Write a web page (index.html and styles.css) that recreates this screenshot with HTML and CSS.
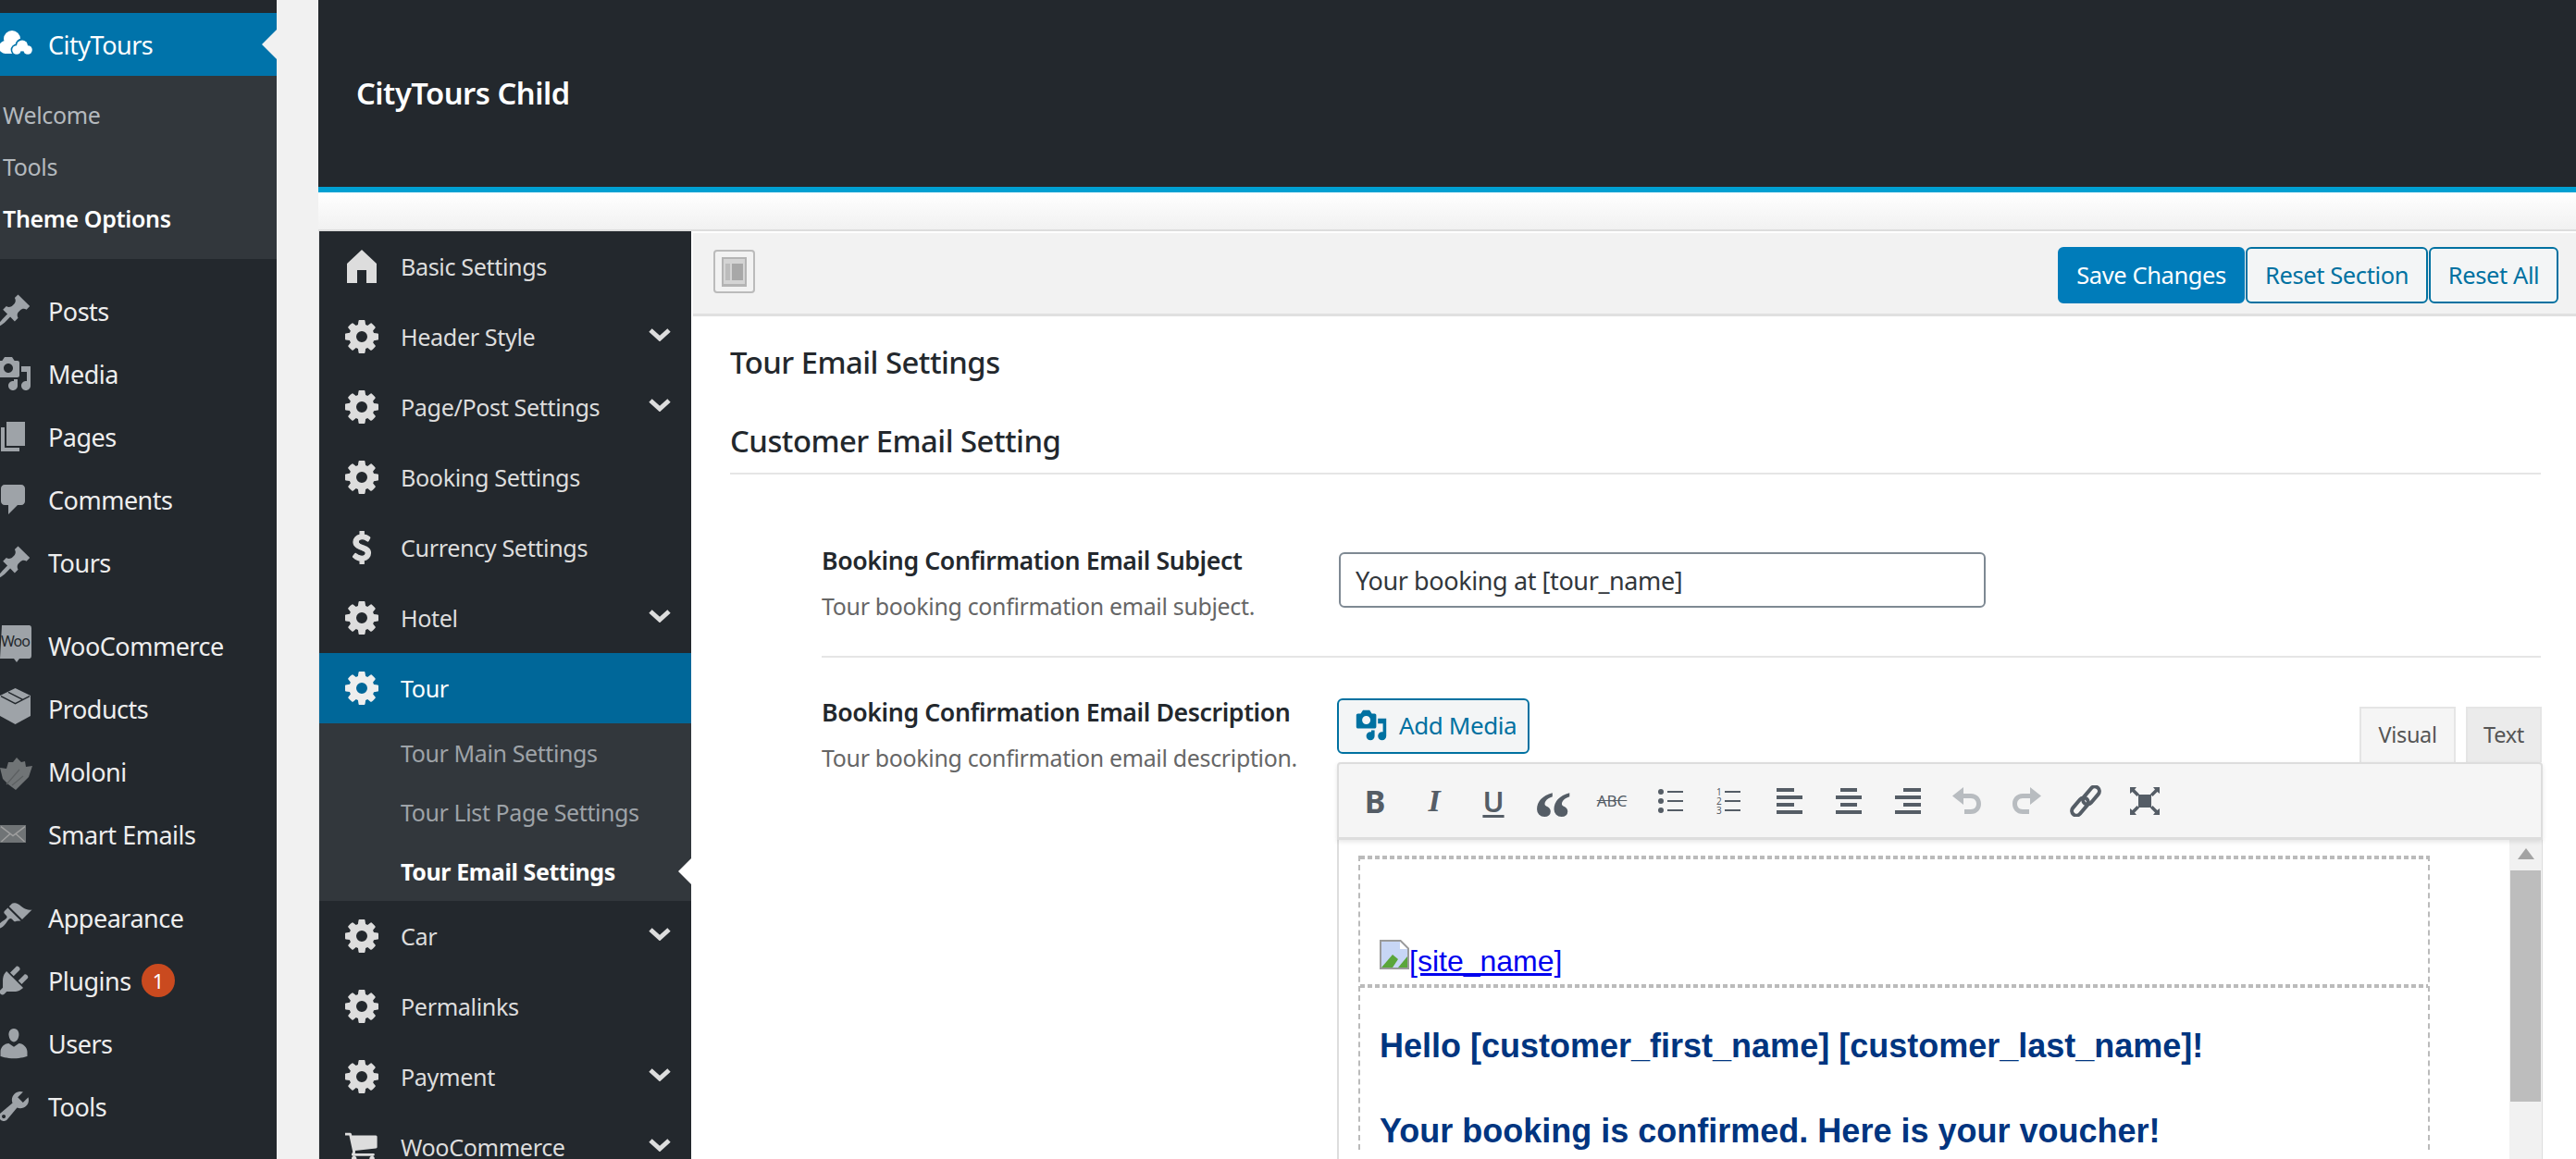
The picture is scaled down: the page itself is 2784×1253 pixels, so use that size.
FILE: index.html
```html
<!DOCTYPE html>
<html lang="en">
<head>
  <meta charset="UTF-8" />
  <title>Tour Email Settings</title>
  <link rel="stylesheet" href="styles.css">
</head>
<body>

  <svg class="sprite" width="0" height="0">
    <symbol id="cog" viewBox="128 128 1536 1536"><path d="M1152 896q0-106-75-181t-181-75-181 75-75 181 75 181 181 75 181-75 75-181zm512-109v222q0 12-8 23t-20 13l-185 28q-19 54-39 91 35 50 107 138 10 12 10 25t-9 23q-27 37-99 108t-94 71q-12 0-26-9l-138-108q-44 23-91 38-16 136-29 186-7 28-36 28h-222q-14 0-24.5-8.5t-11.5-21.5l-28-184q-49-16-90-37l-141 107q-10 9-25 9-14 0-25-11-126-114-165-168-7-10-7-23 0-12 8-23 15-21 51-66.5t54-70.5q-27-50-41-99l-183-27q-13-2-21-12.5t-8-23.5v-222q0-12 8-23t19-13l186-28q14-46 39-92-40-57-107-138-10-12-10-24 0-10 9-23 26-36 98.5-107.5t94.5-71.5q13 0 26 10l138 107q44-23 91-38 16-136 29-186 7-28 36-28h222q14 0 24.5 8.5t11.5 21.5l28 184q49 16 90 37l142-107q9-9 24-9 13 0 25 10 129 119 165 170 7 8 7 22 0 12-8 23-15 21-51 66.5t-54 70.5q26 50 41 98l183 28q13 2 21 12.5t8 23.5z"/></symbol>
    <symbol id="chev" viewBox="0 0 24 16"><path d="M2 4l10 9 10-9" fill="none" stroke="currentColor" stroke-width="5"/></symbol>
    <symbol id="pin" viewBox="0 0 20 20"><path d="M10.44 3.02l1.82-1.82 6.36 6.35-1.83 1.82c-1.05-.68-2.48-.57-3.41.36l-.75.75c-.92.93-1.04 2.35-.35 3.41l-1.83 1.82-2.41-2.41-2.8 2.79c-.42.42-3.38 2.71-3.8 2.29s1.86-3.39 2.28-3.81l2.79-2.79L4.1 9.36l1.83-1.82c1.05.69 2.48.57 3.4-.36l.75-.75c.93-.92 1.05-2.35.36-3.41z"/></symbol>
    <symbol id="media" viewBox="0 0 20 20"><path d="M13 11V4c0-.55-.45-1-1-1h-1.67L9 1H5L3.67 3H2c-.55 0-1 .45-1 1v7c0 .55.45 1 1 1h10c.55 0 1-.45 1-1zM7 4.5c1.38 0 2.5 1.12 2.5 2.5S8.38 9.5 7 9.5 4.5 8.38 4.5 7 5.62 4.5 7 4.5zM14 6h5v10.5c0 1.38-1.12 2.5-2.5 2.5S14 17.88 14 16.5s1.12-2.5 2.5-2.5c.17 0 .34.02.5.05V9h-3V6zm-4 8.05V13h2v3.5c0 1.38-1.12 2.5-2.5 2.5S7 17.88 7 16.5 8.12 14 9.5 14c.17 0 .34.02.5.05z"/></symbol>
  </svg>

  <nav class="admin-menu">
    <div class="admin-item admin-item-active">
      <svg class="admin-icon" viewBox="0 0 20 20">
        <g fill="#fff"><circle cx="9" cy="7" r="4.500"/><circle cx="5.500" cy="11.500" r="3.500"/><rect x="5" y="9" width="9" height="6"/></g>
        <g fill="#0073aa"><circle cx="14.500" cy="10.500" r="3.800"/><circle cx="11.500" cy="13" r="3.200"/><circle cx="17.500" cy="13" r="3.200"/></g>
        <g fill="#fff"><circle cx="14.500" cy="10.800" r="3"/><circle cx="11.500" cy="13" r="2.400"/><circle cx="17.500" cy="13" r="2.400"/></g>
      </svg>
      <span>CityTours</span>
    </div>
    <ul class="admin-sub">
      <li>Welcome</li>
      <li>Tools</li>
      <li class="admin-sub-current">Theme Options</li>
    </ul>

    <div class="admin-group">
      <div class="admin-item"><svg class="admin-icon"><use href="#pin"/></svg><span>Posts</span></div>
      <div class="admin-item"><svg class="admin-icon"><use href="#media"/></svg><span>Media</span></div>
      <div class="admin-item"><svg class="admin-icon" viewBox="0 0 20 20"><path d="M6 15V2h10v13H6zm-1 1h8v2H3V5h2v11z"/></svg><span>Pages</span></div>
      <div class="admin-item"><svg class="admin-icon" viewBox="0 0 20 20"><path d="M5 2h9c1.100 0 2 .9 2 2v7c0 1.100-.9 2-2 2h-2l-5 5v-5H5c-1.100 0-2-.9-2-2V4c0-1.100.9-2 2-2z"/></svg><span>Comments</span></div>
      <div class="admin-item"><svg class="admin-icon"><use href="#pin"/></svg><span>Tours</span></div>
    </div>

    <div class="admin-group">
      <div class="admin-item"><svg class="admin-icon" viewBox="0 0 20 20"><path d="M3.500-1h15a1.500 1.500 0 0 1 1 1.500v15a1.500 1.500 0 0 1-1 1.500h-5.500l-1.500 2-1.500-2h-7.500z"/><text class="woo-text" x="3" y="10.500">Woo</text></svg><span>WooCommerce</span></div>
      <div class="admin-item"><svg class="admin-icon" viewBox="0 0 20 20"><path d="M10.750-1L19 3v11l-8.250 4.500L2.500 14V3z"/><path class="box-line" d="M3 3.300l7.750 4 7.750-4M7 1.200l7.800 4"/></svg><span>Products</span></div>
      <div class="admin-item"><svg class="admin-icon admin-icon-dim" viewBox="0 0 20 20"><path d="M11.500 2.500L14 5l2-.5.500 3 3.500-.5-2 6-3 3-4 4-4-3-3-3L2.500 8 6 8.500 7 5l2.500 0z"/><path class="lotus-line" d="M6 17l7-8M9 17.500l6-5"/></svg><span>Moloni</span></div>
      <div class="admin-item"><svg class="admin-icon admin-icon-dim" viewBox="0 0 20 20"><path d="M2.500 5h14v9.500h-14z"/><path class="mail-line" d="M3 5.800l6.500 5 6.500-5M3.200 14l5-4.500M15.800 14l-5-4.500"/></svg><span>Smart Emails</span></div>
    </div>

    <div class="admin-group">
      <div class="admin-item"><svg class="admin-icon" viewBox="0 0 20 20"><path d="M14.480 11.060L7.410 3.990l1.500-1.500c.5-.56 2.300-.47 3.510.32 1.210.8 1.430 1.280 2.910 2.100 1.180.64 2.450 1.260 4.450.85zm-.71.71L6.700 4.700 4.930 6.470c-.39.39-.39 1.020 0 1.410l1.060 1.060c.39.39.39 1.030 0 1.420-.6.6-1.430 1.110-2.210 1.690-.35.26-.7.53-1.010.84C1.430 13.230.4 14.840 1.200 15.600c.79.76 2.370-.23 3.740-1.600.31-.31.58-.66.84-1.010.58-.78 1.090-1.610 1.690-2.210.39-.39 1.030-.39 1.420 0l1.060 1.060c.39.39 1.020.39 1.410 0z"/></svg><span>Appearance</span></div>
      <div class="admin-item"><svg class="admin-icon" viewBox="0 0 20 20"><path d="M13.110 4.360L9.870 7.600 8 5.730l3.240-3.240c.35-.34 1.050-.2 1.560.32.52.51.66 1.210.31 1.550zm-8 1.770l.91-1.120 9.010 9.010-1.190.84c-.71.71-2.630 1.160-3.820 1.160H6.140L4.900 17.260c-.59.59-1.540.59-2.120 0-.59-.58-.59-1.530 0-2.120l1.240-1.240v-3.880c0-1.130.4-3.190 1.090-3.890zm7.260 3.970l3.240-3.240c.34-.35 1.040-.21 1.550.31.52.51.66 1.210.31 1.550l-3.240 3.250z"/></svg><span>Plugins</span><b class="badge">1</b></div>
      <div class="admin-item"><svg class="admin-icon" viewBox="0 0 20 20"><path d="M10 9.250c-2.270 0-2.730-3.440-2.730-3.440C7 4.020 7.820 2 9.970 2c2.160 0 2.980 2.020 2.710 3.810 0 0-.41 3.440-2.680 3.440zm0 2.570L12.720 10c2.390 0 4.520 2.330 4.520 4.530v2.490s-3.650 1.130-7.240 1.130c-3.650 0-7.240-1.130-7.240-1.130v-2.490c0-2.250 1.940-4.480 4.470-4.480z"/></svg><span>Users</span></div>
      <div class="admin-item"><svg class="admin-icon" viewBox="0 0 20 20"><path d="M16.680 9.770c-1.340 1.340-3.300 1.670-4.950.99l-5.410 6.520c-.99.99-2.590.99-3.580 0s-.99-2.590 0-3.570l6.520-5.420c-.68-1.650-.35-3.610.99-4.950 1.280-1.280 3.120-1.620 4.720-1.060l-2.890 2.890 2.820 2.820 2.860-2.870c.53 1.580.18 3.390-1.080 4.650zM3.810 16.210c.4.39 1.040.39 1.430 0 .4-.4.4-1.040 0-1.430-.39-.4-1.030-.4-1.430 0-.39.39-.39 1.030 0 1.430z"/></svg><span>Tools</span></div>
    </div>
  </nav>

  <div class="main">
    <header class="top-bar"><h2>CityTours Child</h2></header>
    <div class="top-strip"></div>

    <div class="panel">
      <aside class="side">
        <div class="side-item">
          <svg class="side-icon" viewBox="0 0 36 36"><path d="M18 0L34 15v21H23V22H13v14H2V15z"/></svg><span>Basic Settings</span>
        </div>
        <div class="side-item"><svg class="side-icon"><use href="#cog"/></svg><span>Header Style</span><svg class="chev"><use href="#chev"/></svg></div>
        <div class="side-item"><svg class="side-icon"><use href="#cog"/></svg><span>Page/Post Settings</span><svg class="chev"><use href="#chev"/></svg></div>
        <div class="side-item"><svg class="side-icon"><use href="#cog"/></svg><span>Booking Settings</span></div>
        <div class="side-item">
          <svg class="side-icon side-icon-bold" viewBox="256 0 1280 1792"><path d="M1362 1185q0 153-99.500 263.500t-258.500 136.500v175q0 14-9 23t-23 9h-135q-13 0-22.500-9.500t-9.500-22.500v-175q-66-9-127.500-31t-101.500-44.500-74-48-46.500-37.500-17.500-18q-17-21-2-41l103-135q7-10 23-12 15-2 24 9l2 2q113 99 243 125 37 8 74 8 81 0 142.500-43t61.500-122q0-28-15-53t-33.500-42-58.500-37.500-66-32-80-32.500q-39-16-61.500-25t-61.500-26.500-62.500-31-56.500-35.500-53.500-42.500-43.500-49-35.500-58-21-66.500-8.500-78q0-138 98-242t255-134v-180q0-13 9.500-22.500t22.500-9.500h135q14 0 23 9t9 23v176q57 6 110.500 23t87 33.500 63.500 37.500 39 29 15 14q17 18 5 38l-81 146q-8 15-23 16-14 3-27-7-3-3-14.500-12t-39-26.500-58.500-32-74.500-26-85.500-11.500q-95 0-155 43t-60 111q0 26 8.500 48t29.500 41.500 39.500 33 56 31 60.500 27 70 27.500q53 20 81 31.500t76 35 75.500 42.500 62 50 53 63.500 31.500 76.500 13 94z"/></svg><span>Currency Settings</span>
        </div>
        <div class="side-item"><svg class="side-icon"><use href="#cog"/></svg><span>Hotel</span><svg class="chev"><use href="#chev"/></svg></div>
        <div class="side-item side-item-active"><svg class="side-icon"><use href="#cog"/></svg><span>Tour</span></div>
        <ul class="side-sub">
          <li>Tour Main Settings</li>
          <li>Tour List Page Settings</li>
          <li class="side-sub-current">Tour Email Settings</li>
        </ul>
        <div class="side-item"><svg class="side-icon"><use href="#cog"/></svg><span>Car</span><svg class="chev"><use href="#chev"/></svg></div>
        <div class="side-item"><svg class="side-icon"><use href="#cog"/></svg><span>Permalinks</span></div>
        <div class="side-item"><svg class="side-icon"><use href="#cog"/></svg><span>Payment</span><svg class="chev"><use href="#chev"/></svg></div>
        <div class="side-item">
          <svg class="side-icon" viewBox="128 128 1664 1664"><path d="M704 1536q0 52-38 90t-90 38-90-38-38-90 38-90 90-38 90 38 38 90zm896 0q0 52-38 90t-90 38-90-38-38-90 38-90 90-38 90 38 38 90zm128-1088v512q0 24-16.500 42.500t-40.500 21.500l-1044 122q13 60 13 70 0 16-24 64h920q26 0 45 19t19 45-19 45-45 19h-1024q-26 0-45-19t-19-45q0-11 8-31.500t16-36 21.500-40 15.500-29.500l-177-823h-204q-26 0-45-19t-19-45 19-45 45-19h256q16 0 28.500 6.500t19.500 15.500 13 24.500 8 26 5.500 29.500 4.500 26h1201q26 0 45 19t19 45z"/></svg><span>WooCommerce</span><svg class="chev"><use href="#chev"/></svg>
        </div>
      </aside>

      <section class="content">
        <div class="actions">
          <button class="layout-btn">
            <svg width="27" height="32" viewBox="0 0 27 32"><rect width="27" height="32" fill="#b4b4b4"/><rect x="2" y="2" width="23" height="27" fill="#d4d4d4"/><rect x="4" y="7" width="5" height="18" fill="#bcbcbc"/><rect x="11" y="7" width="12" height="18" fill="#a8a8a8"/></svg>
          </button>
          <div class="action-btns">
            <button class="btn btn-primary">Save Changes</button>
            <button class="btn">Reset Section</button>
            <button class="btn btn-reset-all">Reset All</button>
          </div>
        </div>

        <div class="form-wrap">
          <h3 class="page-title">Tour Email Settings</h3>
          <h3 class="section-title">Customer Email Setting</h3>

          <div class="field-row field-row-first">
            <div class="field-label">
              <div class="label-name">Booking Confirmation Email Subject</div>
              <div class="label-desc">Tour booking confirmation email subject.</div>
            </div>
            <div class="field-value">
              <input class="text-input" type="text" value="Your booking at [tour_name]">
            </div>
          </div>

          <div class="field-row field-row-last">
            <div class="field-label">
              <div class="label-name">Booking Confirmation Email Description</div>
              <div class="label-desc">Tour booking confirmation email description.</div>
            </div>
            <div class="field-value">
              <div class="editor-head">
                <button class="btn btn-media">
                  <svg width="36" height="36"><use href="#media"/></svg>Add Media
                </button>
                <div class="tabs">
                  <div class="tab tab-on">Visual</div>
                  <div class="tab">Text</div>
                </div>
              </div>

              <div class="toolbar">
                <span class="tool tool-b">B</span>
                <span class="tool tool-i">I</span>
                <span class="tool tool-u">U</span>
                <span class="tool tool-q">“</span>
                <span class="tool tool-s">ABC</span>
                <span class="tool"><svg width="30" height="26" viewBox="0 0 30 26"><circle cx="4" cy="3" r="3"/><circle cx="4" cy="13" r="3"/><circle cx="4" cy="23" r="3"/><path d="M11 2h17v2H11zM11 12h17v2H11zM11 22h17v2H11z"/></svg></span>
                <span class="tool"><svg class="ol-icon" width="30" height="30" viewBox="0 0 30 30"><text class="ol-num" x="0" y="9">1</text><text class="ol-num" x="0" y="19">2</text><text class="ol-num" x="0" y="29">3</text><path d="M9 4h17v2H9zM9 14h17v2H9zM9 24h17v2H9z"/></svg></span>
                <span class="tool"><svg width="30" height="28" viewBox="0 0 30 28"><path d="M1 0h19v4H1zM1 8h28v4H1zM1 16h19v4H1zM1 24h28v4H1z"/></svg></span>
                <span class="tool"><svg width="30" height="28" viewBox="0 0 30 28"><path d="M6 0h18v4H6zM1 8h28v4H1zM6 16h18v4H6zM1 24h28v4H1z"/></svg></span>
                <span class="tool"><svg width="30" height="28" viewBox="0 0 30 28"><path d="M10 0h19v4H10zM1 8h28v4H1zM10 16h19v4H10zM1 24h28v4H1z"/></svg></span>
                <span class="tool tool-off"><svg width="34" height="30" viewBox="0 0 34 30"><path d="M13 0v7h8c7 0 11 5 11 11s-4 11-11 11h-7v-5h7c4 0 6-3 6-6s-2-6-6-6h-8v7L1 9.500z"/></svg></span>
                <span class="tool tool-off"><svg width="34" height="30" viewBox="0 0 34 30"><path d="M21 0v7h-8C6 7 2 12 2 18s4 11 11 11h7v-5h-7c-4 0-6-3-6-6s2-6 6-6h8v7L33 9.500z"/></svg></span>
                <span class="tool"><svg width="34" height="34" viewBox="0 0 34 34"><g fill="none" stroke="#555d66" stroke-width="4"><rect x="-11" y="-5" width="22" height="10" rx="5" transform="translate(11 23) rotate(-50)"/><rect x="-11" y="-5" width="22" height="10" rx="5" transform="translate(23 11) rotate(-50)"/></g></svg></span>
                <span class="tool"><svg width="34" height="30" viewBox="0 0 34 30"><rect x="10" y="8" width="14" height="14"/><path d="M1 0h7l-2 2.500 5 5-2.500 2.500-5-5L1 7zM33 0h-7l2 2.500-5 5 2.500 2.500 5-5L33 7zM1 30h7l-2-2.500 5-5-2.500-2.500-5 5L1 23zM33 30h-7l2-2.500-5-5 2.500-2.500 5 5L33 23z"/></svg></span>
              </div>

              <div class="editor-body">
                <div class="editor-doc">
                  <div class="mail-box">
                    <div class="mail-head">
                      <svg class="broken-img" width="32" height="32" viewBox="0 0 32 32"><path d="M0 0h23l9 9v23H0z" fill="#9a9a9a"/><path d="M2 2h20l8 8v20H2z" fill="#c7d6f5"/><path d="M2 30l12-14 6 5-6 9z" fill="#5aa63a"/><path d="M20 30l10-12v12z" fill="#5aa63a"/><path d="M22 2v8h8z" fill="#fff"/></svg><a class="site-link">[site_name]</a>
                    </div>
                    <div class="mail-text">
                      <h1>Hello [customer_first_name] [customer_last_name]!</h1>
                      <h1>Your booking is confirmed. Here is your voucher!</h1>
                    </div>
                  </div>
                </div>
                <div class="scroll">
                  <div class="scroll-arrow"></div>
                  <div class="scroll-thumb"></div>
                </div>
              </div>
            </div>
          </div>
        </div>
      </section>
    </div>
  </div>

</body>
</html>
```

FILE: styles.css
```css
* {
  box-sizing: border-box;
}

html, body {
  margin: 0;
  padding: 0;
  height: 1253px;
  overflow: hidden;
}

body {
  display: flex;
  background: #f1f1f1;
  font-family: "Noto Sans", "Open Sans", sans-serif;
  color: #23282d;
}

ul {
  list-style: none;
  margin: 0;
  padding: 0;
}

button {
  font-family: inherit;
}

.sprite {
  display: block;
  width: 0;
  height: 0;
}

/* wp admin menu */
.admin-menu {
  flex: 0 0 299px;
  background: #23282d;
  padding-top: 14px;
  margin-right: 45px;
  overflow: hidden;
}

.admin-item {
  position: relative;
  display: flex;
  align-items: center;
  height: 68px;
  font-size: 27px;
  letter-spacing: -0.5px;
  color: #eee;
  padding-left: 52px;
}

.admin-icon {
  position: absolute;
  left: -5px;
  top: 14px;
  width: 40px;
  height: 40px;
  fill: #9ea3a8;
  overflow: visible;
}

.admin-icon-dim {
  fill: #707476;
}

.woo-text {
  font: 8px "Noto Sans", sans-serif;
  fill: #23282d;
}

.box-line {
  fill: none;
  stroke: #23282d;
  stroke-width: 0.7;
}

.lotus-line {
  fill: none;
  stroke: #5c6062;
  stroke-width: 0.6;
}

.mail-line {
  fill: none;
  stroke: #a0a0a0;
  stroke-width: 0.7;
}

.admin-item-active {
  background: #0073aa;
  color: #fff;
}

.admin-item-active::after {
  content: "";
  position: absolute;
  right: 0;
  top: 18px;
  border: 16px solid transparent;
  border-left: 0;
  border-right-color: #f1f1f1;
}

.admin-sub {
  background: #32373c;
  padding: 15px 0 15px 3px;
}

.admin-sub li {
  height: 56px;
  line-height: 54px;
  font-size: 25px;
  letter-spacing: -0.35px;
  color: #b4b9be;
}

.admin-sub .admin-sub-current {
  color: #fff;
  font-weight: 600;
}

.admin-group {
  margin-top: 22px;
}

.badge {
  width: 36px;
  height: 36px;
  margin-left: 11px;
  border-radius: 50%;
  background: #ca4a1f;
  color: #fff;
  font-size: 22px;
  font-weight: 400;
  line-height: 36px;
  text-align: center;
}

/* theme options */
.main {
  flex: 1;
  min-width: 0;
}

.top-bar {
  height: 208px;
  background: #23282d;
  border-bottom: 6px solid #00a0d2;
  padding: 0 41px 2px;
  display: flex;
  align-items: center;
}

.top-bar h2 {
  margin: 0;
  font-size: 32.700px;
  font-weight: 600;
  letter-spacing: -0.5px;
  color: #fff;
}

.top-strip {
  height: 42px;
  background: linear-gradient(#fff, #f1f1f1);
  border-bottom: 2px solid #ddd;
}

.panel {
  display: flex;
  background: #fff;
  height: 1003px;
  border-left: 1px solid #e5e5e5;
}

.side {
  flex: 0 0 402px;
  background: #23282d;
  overflow: hidden;
}

.side-item {
  display: flex;
  align-items: center;
  height: 76px;
  padding-left: 28px;
  padding-right: 22px;
  font-size: 25.200px;
  letter-spacing: -0.4px;
  color: #ddd;
}

.side-item span {
  flex: 1;
}

.side-icon {
  width: 36px;
  height: 36px;
  margin-right: 24px;
  fill: #ddd;
  flex: none;
}

.side-icon-bold {
  stroke: #ddd;
  stroke-width: 70;
}

.chev {
  width: 24px;
  height: 16px;
  margin-top: -6px;
  color: #ddd;
}

.side-item-active {
  background: #006799;
  color: #fff;
}

.side-item-active .side-icon {
  fill: #eee;
}

.side-sub {
  background: #32373c;
  padding-left: 88px;
}

.side-sub li {
  position: relative;
  height: 64px;
  line-height: 64px;
  font-size: 25px;
  letter-spacing: -0.4px;
  color: #9ea3a8;
}

.side-sub .side-sub-current {
  color: #fff;
  font-weight: 700;
  font-size: 25px;
}

.side-sub-current::after {
  content: "";
  position: absolute;
  right: 0;
  top: 18px;
  border: 14px solid transparent;
  border-left: 0;
  border-right-color: #fff;
}

.content {
  flex: 1;
  min-width: 0;
  margin-left: 2px;
}

.actions {
  margin-top: 2px;
  height: 90px;
  background: #f2f2f2;
  border-bottom: 3px solid #e0e0e0;
  padding: 15px 19px 0 22px;
  display: flex;
  justify-content: space-between;
  align-items: flex-start;
}

.layout-btn {
  width: 45px;
  height: 47px;
  margin-top: 3px;
  padding: 0;
  background: #f2f2f2;
  border: 2px solid #bbb;
  border-radius: 4px;
  display: flex;
  align-items: center;
  justify-content: center;
}

.action-btns {
  display: flex;
  gap: 1px;
}

.btn {
  height: 61px;
  width: 197px;
  padding: 0 0 2px;
  background: #f3f5f6;
  border: 2px solid #0071a1;
  border-radius: 6px;
  color: #0071a1;
  font-size: 25.500px;
  letter-spacing: -0.4px;
}

.btn-primary {
  width: 202px;
  background: #007cba;
  border-color: #007cba;
  color: #fff;
}

.btn-reset-all {
  width: 140px;
}

.form-wrap {
  padding: 30px 38px 0 40px;
}

.page-title,
.section-title {
  margin: 0;
  line-height: 40px;
  font-size: 32.800px;
  font-weight: 500;
  letter-spacing: -0.5px;
}

.section-title {
  margin-top: 45px;
  padding-bottom: 14px;
  border-bottom: 2px solid #e5e5e5;
}

.field-row {
  display: grid;
  grid-template-columns: 557px 1fr;
  margin-left: 99px;
}

.field-row-first {
  padding: 77px 0 38px;
  border-bottom: 2px solid #e5e5e5;
}

.field-row-last {
  padding-top: 43px;
}

.label-name {
  line-height: 32px;
  font-size: 26.700px;
  font-weight: 600;
  letter-spacing: -0.4px;
}

.label-desc {
  margin-top: 17px;
  line-height: 32px;
  font-size: 24.900px;
  letter-spacing: -0.3px;
  color: #666;
}

.field-row-first .field-value {
  padding-top: 7px;
}

.text-input {
  display: block;
  width: 699px;
  height: 60px;
  margin-left: 2px;
  padding: 0 16px;
  border: 2px solid #7e8993;
  border-radius: 6px;
  font-family: inherit;
  font-size: 27px;
  letter-spacing: -0.4px;
  color: #32373c;
}

.editor-head {
  display: flex;
  justify-content: space-between;
  align-items: flex-start;
  height: 70px;
  margin-right: -2px;
}

.btn-media {
  width: 208px;
  height: 60px;
  display: flex;
  align-items: center;
  gap: 12px;
  padding-left: 17px;
  margin-top: 1px;
  font-size: 26px;
  fill: #0071a1;
}

.btn-media svg {
  flex: none;
}

.tabs {
  display: flex;
  gap: 11px;
  margin-top: 10px;
  margin-right: 1px;
}

.tab {
  height: 60px;
  padding: 0 17px;
  line-height: 56px;
  background: #ebebeb;
  border: 2px solid #e5e5e5;
  border-bottom: 0;
  font-size: 23.500px;
  letter-spacing: -0.3px;
  color: #555;
}

.tab-on {
  width: 104px;
  background: #f5f5f5;
  text-align: center;
  padding: 0;
}

.toolbar {
  height: 84px;
  margin-right: -2px;
  background: #f5f5f5;
  border: 2px solid #ddd;
  border-width: 2px 2px 3px;
  border-radius: 4px 4px 0 0;
  box-shadow: 0 2px 5px rgba(0, 0, 0, 0.1);
  padding-left: 7px;
  display: flex;
  align-items: center;
  position: relative;
}

.tool {
  width: 64px;
  height: 40px;
  display: flex;
  align-items: center;
  justify-content: center;
  fill: #555d66;
  color: #555d66;
}

.tool-off {
  fill: #b8bcc0;
}

.tool-b {
  font: 700 34px "Noto Sans", sans-serif;
}

.tool-i {
  font: italic 700 34px "Liberation Serif", serif;
}

.tool-u {
  font: 600 31px "Noto Sans", sans-serif;
  text-decoration: underline;
  text-decoration-thickness: 3px;
  text-underline-offset: 3px;
}

.tool-q {
  font: 700 84px/1 "Liberation Serif", serif;
  padding-top: 40px;
}

.tool-s {
  font-size: 17px;
  text-decoration: line-through;
}

.ol-icon {
  overflow: visible;
}

.ol-num {
  font: 10px "Noto Sans", sans-serif;
}

.editor-body {
  display: flex;
  margin-right: -2px;
  height: 400px;
  border-left: 2px solid #ddd;
  border-right: 1px solid #ddd;
}

.editor-doc {
  flex: 1;
  min-width: 0;
  padding: 17px 0 0 21px;
  overflow: hidden;
}

/* dashed cells of the mail template */
.mail-box {
  width: 1158px;
  border-left: 2px dashed #bbb;
  border-right: 2px dashed #bbb;
  font-family: "Liberation Sans", Arial, sans-serif;
}

.mail-head {
  height: 143px;
  padding: 91px 0 0 21px;
  background:
    repeating-linear-gradient(90deg, #bbb 0 5px, transparent 5px 8px) top / 100% 4px no-repeat,
    repeating-linear-gradient(90deg, #bbb 0 5px, transparent 5px 8px) bottom / 100% 4px no-repeat;
}

.broken-img {
  vertical-align: 2px;
}

.site-link {
  font-size: 32px;
  color: #0000ee;
  text-decoration: underline;
}

.mail-text {
  padding: 43px 21px 0;
}

.mail-text h1 {
  margin: 0 0 52px;
  line-height: 40px;
  font-size: 36px;
  font-weight: 700;
  color: #003580;
}

.scroll {
  flex: 0 0 35px;
  background: #f1f1f1;
}

.scroll-arrow {
  width: 0;
  height: 0;
  margin: 9px auto 0;
  border: 9px solid transparent;
  border-top: 0;
  border-bottom: 12px solid #a3a3a3;
}

.scroll-thumb {
  height: 250px;
  margin: 12px 1px 0;
  background: #bdbdbd;
}
```
